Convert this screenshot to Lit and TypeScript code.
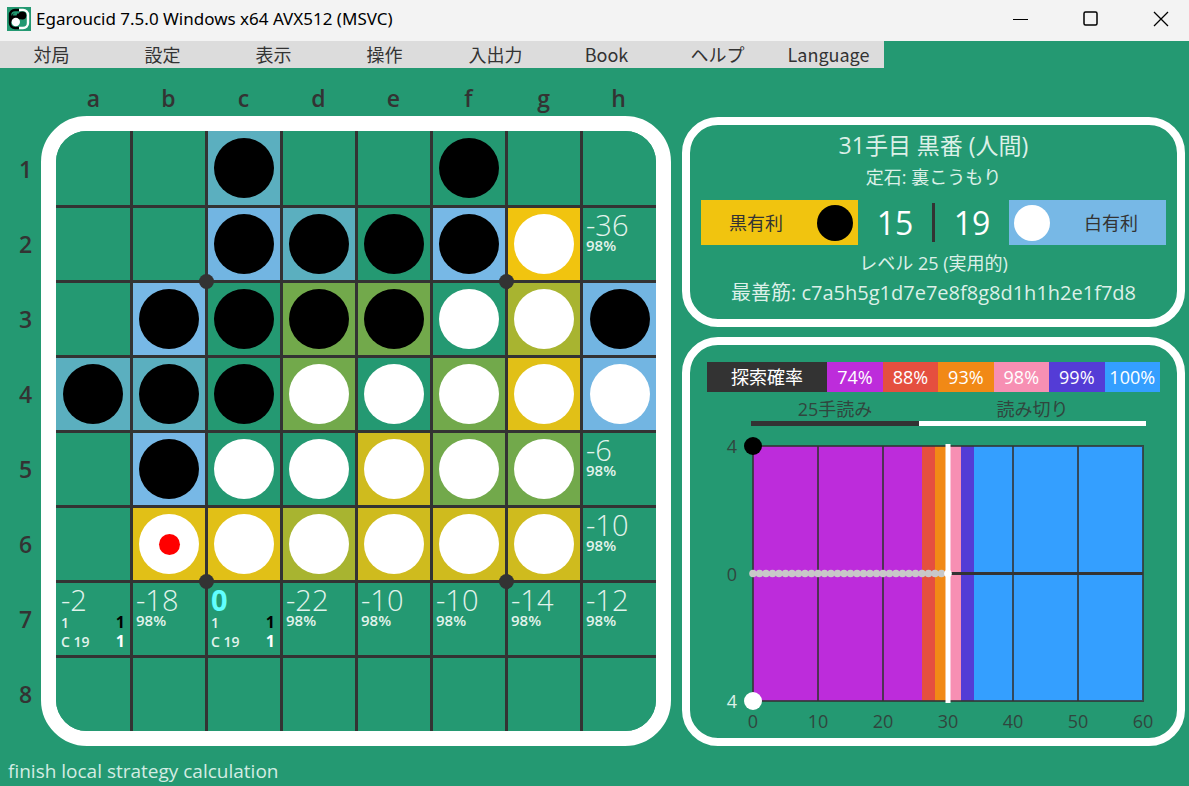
import { LitElement, html, css, svg } from "lit";
import { customElement } from "lit/decorators.js";
import { classMap } from "lit/directives/class-map.js";
import { styleMap } from "lit/directives/style-map.js";

const MENU = ["対局", "設定", "表示", "操作", "入出力", "Book", "ヘルプ", "Language"];

// X = black disc, O = white disc
const DISCS = [
  "..X..X..",
  "..XXXXO.",
  ".XXXXOOX",
  "XXXOOOOO",
  ".XOOOOO.",
  ".OOOOOO.",
  "........",
  "........",
];

const SHADES: Record<string, string> = {
  ".": "#249972",
  t: "#5bafbf",
  s: "#72b5e2",
  b: "#77b8e6",
  g: "#72a94b",
  l: "#a8b430",
  m: "#cfbb1e",
  y: "#e1c017",
  z: "#f1c40f",
};

// Shade of each square in the local strategy view
const STRATEGY = [
  "..t.....",
  "..st.bz.",
  ".b.gg.ls",
  "tt.g.gys",
  ".b..mgg.",
  ".yylmmm.",
  "........",
  "........",
];

interface Hint {
  value: string;
  rate?: string;
  best?: boolean;
}

const HINTS: Record<string, Hint> = {
  h2: { value: "-36", rate: "98%" },
  h5: { value: "-6", rate: "98%" },
  h6: { value: "-10", rate: "98%" },
  a7: { value: "-2" },
  b7: { value: "-18", rate: "98%" },
  c7: { value: "0", best: true },
  d7: { value: "-22", rate: "98%" },
  e7: { value: "-10", rate: "98%" },
  f7: { value: "-10", rate: "98%" },
  g7: { value: "-14", rate: "98%" },
  h7: { value: "-12", rate: "98%" },
};

const COLS = "abcdefgh".split("");
const LAST_MOVE = "b6";
const STARS = ["c3", "g3", "c7", "g7"];

@customElement("othello-board")
export class OthelloBoard extends LitElement {
  static styles = css`
    :host {
      display: grid;
      grid-template-columns: 41px auto;
      grid-template-rows: 36px auto;
      align-content: start;
      color: #333;
      font: 600 23px/36px "Open Sans", "Noto Sans CJK JP", sans-serif;
    }
    .cols {
      grid-column: 2;
      display: grid;
      grid-template-columns: repeat(8, 75px);
      padding: 0 15px;
      text-align: center;
    }
    .rows {
      display: grid;
      grid-template-rows: repeat(8, 75px);
      padding: 15px 0 15px 10px;
      align-items: center;
      justify-items: center;
    }
    .frame {
      border: 15px solid #fff;
      border-radius: 46px;
      overflow: hidden;
      display: grid;
      grid-template-columns: repeat(8, 75px);
      grid-auto-rows: 75px;
    }
    .cell {
      position: relative;
      box-sizing: border-box;
      border: solid #333;
      border-width: 2px 1px 1px 2px;
      padding: 4px 3px;
      display: flex;
      flex-direction: column;
      color: #e2f3ec;
    }
    .cell.top { border-top-width: 0; }
    .cell.bottom { border-bottom-width: 0; }
    .cell.left { border-left-width: 0; padding-left: 5px; }
    .cell.right { border-right-width: 0; }
    .cell.occupied { padding: 0; }
    .disc {
      width: 60px;
      height: 60px;
      margin: auto;
      border-radius: 50%;
      display: grid;
      place-items: center;
      flex: none;
    }
    .black { background: #000; }
    .white { background: #fff; }
    .last {
      width: 21px;
      height: 21px;
      border-radius: 50%;
      background: #f00;
    }
    .star {
      position: absolute;
      left: -9px;
      top: -9px;
      width: 15px;
      height: 15px;
      border-radius: 50%;
      background: #333;
      z-index: 1;
    }
    .value { font-size: 29px; line-height: 26px; font-weight: 300; }
    .value.best { font-weight: 700; color: #61ffff; }
    .small { font-size: 15px; line-height: 14px; font-weight: 600; }
    .split {
      display: flex;
      justify-content: space-between;
      padding-right: 2px;
      font-size: 14px;
      line-height: 19px;
      font-weight: 600;
    }
    .dark, .light { font-size: 16px; font-weight: 700; }
    .dark { color: #000; }
    .light { color: #fff; }
  `;

  private cell(row: number, col: number) {
    const name = COLS[col] + (row + 1);
    const disc = DISCS[row][col];
    const hint = HINTS[name];
    const classes = {
      cell: true,
      top: row === 0,
      bottom: row === 7,
      left: col === 0,
      right: col === 7,
      occupied: disc !== ".",
    };
    return html`<div
      class=${classMap(classes)}
      style=${styleMap({ backgroundColor: SHADES[STRATEGY[row][col]] })}
    >
      ${STARS.includes(name) ? html`<span class="star"></span>` : null}
      ${disc !== "."
        ? html`<span class="disc ${disc === "X" ? "black" : "white"}"
            >${name === LAST_MOVE ? html`<span class="last"></span>` : null}</span
          >`
        : null}
      ${hint
        ? html`<span class="value ${hint.best ? "best" : ""}">${hint.value}</span>
            ${hint.rate
              ? html`<span class="small">${hint.rate}</span>`
              : html`<span class="split"><span>1</span><span class="dark">1</span></span>
                  <span class="split"><span>C 19</span><span class="light">1</span></span>`}`
        : null}
    </div>`;
  }

  render() {
    return html`
      <div class="cols">${COLS.map((c) => html`<span>${c}</span>`)}</div>
      <div class="rows">${DISCS.map((_, i) => html`<span>${i + 1}</span>`)}</div>
      <div class="frame">
        ${DISCS.map((_, r) => COLS.map((_c, c) => this.cell(r, c)))}
      </div>
    `;
  }
}

@customElement("game-info")
export class GameInfo extends LitElement {
  static styles = css`
    :host {
      display: flex;
      flex-direction: column;
      align-items: center;
      box-sizing: border-box;
      border: 8px solid #fff;
      border-radius: 36px;
      padding: 4px 11px 11px;
      color: #dcf0e8;
      font: 400 18px/30px "Open Sans", "Noto Sans CJK JP", sans-serif;
    }
    .turn { font-size: 23px; line-height: 33px; }
    .score {
      align-self: stretch;
      display: grid;
      grid-template-columns: 157px 1fr 3px 1fr 157px;
      align-items: center;
      margin: 8px 0 3px;
      color: #fff;
      font-size: 32px;
      text-align: center;
    }
    .side {
      display: flex;
      align-items: center;
      gap: 6px;
      height: 45px;
      box-sizing: border-box;
      color: #333;
      font-size: 18px;
    }
    .side span { flex: 1; }
    .gold { background: #f1c40f; padding-right: 5px; }
    .sky { background: #77b8e6; padding-left: 5px; }
    .disc { width: 36px; height: 36px; border-radius: 50%; flex: none; }
    .black { background: #000; }
    .white { background: #fff; }
    .bar { height: 39px; background: #333; }
    .line { font-size: 20px; }
  `;

  render() {
    return html`
      <div class="turn">31手目 黒番 (人間)</div>
      <div>定石: 裏こうもり</div>
      <div class="score">
        <div class="side gold"><span>黒有利</span><i class="disc black"></i></div>
        <div>15</div>
        <i class="bar"></i>
        <div>19</div>
        <div class="side sky"><i class="disc white"></i><span>白有利</span></div>
      </div>
      <div>レベル 25 (実用的)</div>
      <div class="line">最善筋: c7a5h5g1d7e7e8f8g8d1h1h2e1f7d8</div>
    `;
  }
}

const LEVELS = [
  { label: "74%", color: "#bd2cdb", from: 0, to: 26 },
  { label: "88%", color: "#e54f3f", from: 26, to: 28 },
  { label: "93%", color: "#f18916", from: 28, to: 30 },
  { label: "98%", color: "#f78fb3", from: 30, to: 32 },
  { label: "99%", color: "#543cd6", from: 32, to: 34 },
  { label: "100%", color: "#349fff", from: 34, to: 60 },
];

@customElement("score-graph")
export class ScoreGraph extends LitElement {
  static styles = css`
    :host {
      display: flex;
      flex-direction: column;
      box-sizing: border-box;
      border: 8px solid #fff;
      border-radius: 36px;
      padding: 17px 17px 0;
      color: #30463e;
      font: 400 18px/22px "Open Sans", "Noto Sans CJK JP", sans-serif;
    }
    .legend {
      display: grid;
      grid-template-columns: 13fr repeat(6, 6fr);
      line-height: 30px;
      color: #fff;
      text-align: center;
    }
    .title { background: #333; }
    .depth {
      display: grid;
      grid-template-columns: 168fr 227fr;
      text-align: center;
      margin: 6px 14px 0 44px;
    }
    .depth span { border-bottom: 5px solid #333; padding-bottom: 1px; }
    .depth .full { border-color: #fff; }
    .chart {
      display: block;
      width: 100%;
      height: auto;
      overflow: visible;
    }
    .chart text { font-size: 18px; fill: #30463e; }
    .chart .pale { fill: #dcf0e8; }
  `;

  render() {
    const x0 = 46;
    const y0 = 20;
    const step = 6.5;
    const h = 255;
    const w = step * 60;
    return html`
      <div class="legend">
        <span class="title">探索確率</span>
        ${LEVELS.map(
          (l) => html`<span style=${styleMap({ backgroundColor: l.color })}>${l.label}</span>`,
        )}
      </div>
      <div class="depth"><span>25手読み</span><span class="full">読み切り</span></div>
      <svg class="chart" viewBox="0 0 453 312" role="img" aria-label="評価値グラフ">
        ${LEVELS.map(
          (l) => svg`<rect x=${x0 + l.from * step} y=${y0} width=${(l.to - l.from) * step}
            height=${h} fill=${l.color} />`,
        )}
        <rect x=${x0} y=${y0} width=${w} height=${h} fill="none" stroke="#333" stroke-opacity=".8" stroke-width="2" />
        ${[10, 20, 30, 40, 50].map(
          (n) => svg`<path d="M${x0 + n * step} ${y0}v${h}" stroke="#333" stroke-opacity=".8" stroke-width="2" />`,
        )}
        <path d="M${x0} ${y0 + h / 2}h${w}" stroke="#333" stroke-width="3" />
        <path d="M${x0 + 30 * step} ${y0 - 2}v${h + 4}" stroke="#fff" stroke-width="5" />
        ${Array.from(
          { length: 31 },
          (_, n) => svg`<circle cx=${x0 + n * step} cy=${y0 + h / 2} r="3.8"
            fill=${n === 30 ? "#fff" : "#c8c8c8"} />`,
        )}
        <circle cx=${x0} cy=${y0} r="9" fill="#000" />
        <circle cx=${x0} cy=${y0 + h} r="9" fill="#fff" />
        <text x="30" y=${y0 + 7} text-anchor="end">4</text>
        <text x="30" y=${y0 + h / 2 + 7} text-anchor="end">0</text>
        <text class="pale" x="30" y=${y0 + h + 7} text-anchor="end">4</text>
        ${[0, 10, 20, 30, 40, 50, 60].map(
          (n) => svg`<text x=${x0 + n * step} y=${y0 + h + 27} text-anchor="middle">${n}</text>`,
        )}
      </svg>
    `;
  }
}

@customElement("app-root")
export class AppRoot extends LitElement {
  static styles = css`
    :host {
      display: flex;
      flex-direction: column;
      min-height: 100vh;
      overflow: hidden;
      background: #249972;
      font-family: "Open Sans", "Noto Sans CJK JP", sans-serif;
    }
    .titlebar {
      display: flex;
      align-items: center;
      height: 41px;
      box-sizing: border-box;
      padding: 0 12px 4px 7px;
      gap: 5px;
      background: #f3f3f3;
      color: #000;
    }
    .titlebar h1 {
      flex: 1;
      margin: 0;
      font: 400 17px/24px "Noto Sans", sans-serif;
    }
    .window {
      display: flex;
      gap: 38px;
    }
    .window button {
      width: 32px;
      height: 32px;
      padding: 0;
      border: 0;
      background: none;
      display: grid;
      place-items: center;
    }
    .menu {
      display: flex;
      margin-left: -4px;
    }
    .menu button {
      width: 111px;
      height: 27px;
      padding: 0;
      border: 0;
      background: #dcdcdc;
      color: #333;
      font: 400 18px/27px "Noto Sans CJK JP", sans-serif;
    }
    .main {
      display: flex;
      align-items: flex-start;
      gap: 11px;
      padding: 12px 4px 0 0;
    }
    .side {
      flex: 1;
      display: flex;
      flex-direction: column;
      gap: 10px;
      padding-top: 37px;
    }
    .status {
      padding: 12px 8px 0;
      color: #d3ece3;
      font-size: 19px;
      line-height: 26px;
    }
  `;

  render() {
    return html`
      <header class="titlebar">
        <svg width="24" height="24" viewBox="0 0 24 24" aria-hidden="true">
          <rect width="24" height="24" fill="#249972" />
          <path d="M12 3H8a5 5 0 0 0-5 5v8a5 5 0 0 0 5 5h4" fill="none" stroke="#000" stroke-width="2.400" />
          <path d="M12 3h4a5 5 0 0 1 5 5v8a5 5 0 0 1-5 5h-4" fill="none" stroke="#fff" stroke-width="2.400" />
          <path d="M4 9c2-3 5-4 8-2l2 5-5 1-5 2z" fill="#000" />
          <path d="M5.500 8.500C6.500 6 8.500 5 11 5.500L9.500 8.500z" fill="#249972" />
          <circle cx="15.300" cy="8.500" r="4" fill="#000" />
          <circle cx="8.800" cy="15" r="4.200" fill="#fff" />
        </svg>
        <h1>Egaroucid 7.5.0 Windows x64 AVX512 (MSVC)</h1>
        <div class="window">
          <button aria-label="最小化">
            <svg width="16" height="16"><path d="M0 8.500h15" stroke="#000" fill="none" /></svg>
          </button>
          <button aria-label="最大化">
            <svg width="16" height="16"><rect x="1" y="1" width="13" height="13" rx="1.500" stroke="#000" stroke-width="1.500" fill="none" /></svg>
          </button>
          <button aria-label="閉じる">
            <svg width="16" height="16"><path d="M1 1l14 14M15 1l-14 14" stroke="#000" stroke-width="1.300" fill="none" /></svg>
          </button>
        </div>
      </header>
      <nav class="menu">${MENU.map((m) => html`<button>${m}</button>`)}</nav>
      <main class="main">
        <othello-board></othello-board>
        <div class="side">
          <game-info></game-info>
          <score-graph></score-graph>
        </div>
      </main>
      <footer class="status">finish local strategy calculation</footer>
    `;
  }
}
